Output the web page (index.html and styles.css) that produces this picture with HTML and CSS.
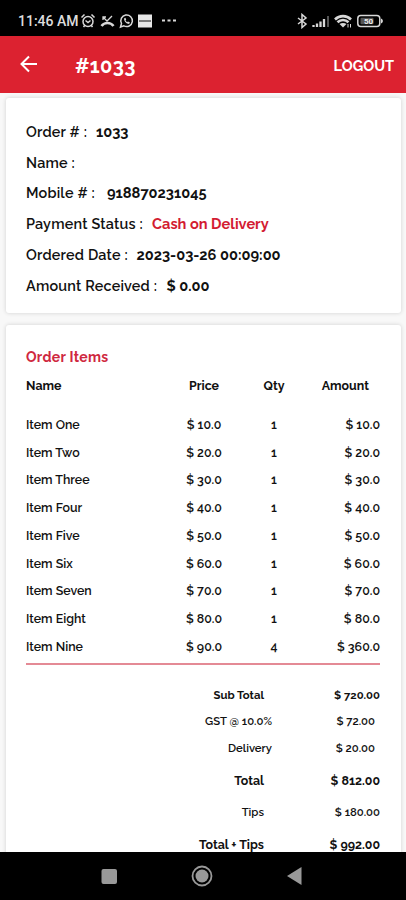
FILE: index.html
```html
<!DOCTYPE html>
<html lang="en">
<head>
    <meta charset="UTF-8">
    <meta name="viewport" content="width=device-width, initial-scale=1.0">
    <title>Order #1033</title>
    <link rel="stylesheet" href="styles.css">
</head>
<body>
    <!-- Status bar -->
    <div class="status-bar">
        <span class="clock">11:46 AM</span>
        <svg class="status-icons" width="100" height="16" viewBox="0 0 100 16" fill="none" stroke="#d8d8d8" stroke-width="1.5">
            <circle cx="8" cy="8.5" r="5"/>
            <path d="M1.5 4.5l3-3M14.5 4.5l-3-3M3.5 14l1.5-2M12.5 14L11 12M5.5 7.5L8 9.5l2.5-2"/>
            <path d="M23 4l4 4 5-5M23 7V4h3" stroke-width="1.3"/>
            <path d="M21.5 13c3-4 9-4 12 0" stroke-width="2.6"/>
            <path d="M40.5 14l1-3.5a5.8 5.8 0 1 1 2.4 2.4z"/>
            <path d="M44 5.5c0 3 2.5 5.3 5 5.5l1-1.5-2-1-1 .8-1.5-1.8.7-1-.8-1.7z" fill="#d8d8d8" stroke="none"/>
            <rect x="58" y="1.5" width="14" height="13" fill="#e6e6e6" stroke="none"/>
            <path d="M59 8h12" stroke="#555" stroke-width="1.5"/>
            <path d="M82 7.5h3M87.5 7.5h3M93 7.5h3" stroke-width="2.2"/>
        </svg>
        <svg class="status-icons right" width="88" height="16" viewBox="0 0 88 16" fill="none" stroke="#d8d8d8" stroke-width="1.5">
            <path d="M1 5l8 6-4 3.5V1.5L9 5l-8 6"/>
            <path d="M16.5 14v-2M20 14v-3.5M23.5 14V8.5M27 14V6" stroke-width="2.3"/>
            <path d="M31 14V3" stroke="#555" stroke-width="2"/>
            <path d="M38 6.5c4.5-4.5 11.5-4.5 16 0M40.5 9.2c3.2-3 7.8-3 11 0" stroke-width="2.6"/>
            <path d="M42.5 11l3.5 3.5 3.5-3.5c-2-1.5-5-1.5-7 0z" fill="#d8d8d8" stroke="none"/>
            <path d="M51 11v3.5M53.5 11v3.5" stroke-width="1"/>
            <rect x="60.8" y="2.5" width="22" height="11" rx="3"/>
            <path d="M84 5.5c2.5 1 2.5 4 0 5z" fill="#d8d8d8" stroke="none"/>
            <rect x="63.5" y="4.8" width="13" height="6.4" rx="1" fill="#555" stroke="none"/>
            <text class="battery-text" x="71.5" y="11">50</text>
        </svg>
    </div>

    <!-- Top bar -->
    <div class="app-bar">
        <svg class="back" width="18" height="18" viewBox="0 0 18 18" fill="none" stroke="#fff" stroke-width="2">
            <path d="M17 9H2M9 1.5L1.5 9 9 16.5"/>
        </svg>
        <h1>#1033</h1>
        <span class="logout">LOGOUT</span>
    </div>

    <div class="content">
        <!-- Order details -->
        <div class="card info">
            <div class="info-row"><span class="w-order">Order # :</span><b>1033</b></div>
            <div class="info-row"><span>Name :</span></div>
            <div class="info-row"><span class="w-mobile">Mobile # :</span><b>918870231045</b></div>
            <div class="info-row"><span class="w-payment">Payment Status :</span><b class="red">Cash on Delivery</b></div>
            <div class="info-row"><span class="w-date">Ordered Date :</span><b>2023-03-26 00:09:00</b></div>
            <div class="info-row"><span class="w-amount">Amount Received :</span><b>$ 0.00</b></div>
        </div>

        <!-- Order items -->
        <div class="card items">
            <h2>Order Items</h2>
            <div class="row head"><span>Name</span><span>Price</span><span>Qty</span><span>Amount</span></div>
            <div class="row"><span>Item One</span><span>$ 10.0</span><span>1</span><span>$ 10.0</span></div>
            <div class="row"><span>Item Two</span><span>$ 20.0</span><span>1</span><span>$ 20.0</span></div>
            <div class="row"><span>Item Three</span><span>$ 30.0</span><span>1</span><span>$ 30.0</span></div>
            <div class="row"><span>Item Four</span><span>$ 40.0</span><span>1</span><span>$ 40.0</span></div>
            <div class="row"><span>Item Five</span><span>$ 50.0</span><span>1</span><span>$ 50.0</span></div>
            <div class="row"><span>Item Six</span><span>$ 60.0</span><span>1</span><span>$ 60.0</span></div>
            <div class="row"><span>Item Seven</span><span>$ 70.0</span><span>1</span><span>$ 70.0</span></div>
            <div class="row"><span>Item Eight</span><span>$ 80.0</span><span>1</span><span>$ 80.0</span></div>
            <div class="row"><span>Item Nine</span><span>$ 90.0</span><span>4</span><span>$ 360.0</span></div>

            <div class="totals">
                <div class="total-row semi"><span>Sub Total</span><span>$ 720.00</span></div>
                <div class="total-row tax"><span>GST @ 10.0%</span><span>$ 72.00</span></div>
                <div class="total-row tax"><span>Delivery</span><span>$ 20.00</span></div>
                <div class="total-row strong"><span>Total</span><span>$ 812.00</span></div>
                <div class="total-row"><span>Tips</span><span>$ 180.00</span></div>
                <div class="total-row strong"><span>Total + Tips</span><span>$ 992.00</span></div>
            </div>
        </div>
    </div>

    <!-- Navigation buttons -->
    <div class="nav-bar">
        <svg width="406" height="48" viewBox="0 0 406 48" fill="#999">
            <rect x="101.5" y="17" width="15.5" height="15" rx="2"/>
            <circle cx="202" cy="24" r="9.5" fill="none" stroke="#999" stroke-width="1.8"/>
            <circle cx="202" cy="24" r="6.5"/>
            <path d="M287 24l14.5-9v18z"/>
        </svg>
    </div>
</body>
</html>
```
FILE: styles.css
```css
* {
    box-sizing: border-box;
}

body {
    margin: 0;
    height: 900px;
    display: flex;
    flex-direction: column;
    overflow: hidden;
    background-color: #f8f8f8;
    color: #111;
    font-family: Raleway, Lato, sans-serif;
    font-variant-numeric: oldstyle-nums;
}

h1, h2 {
    margin: 0;
}

/* Status bar */
.status-bar {
    flex: none;
    height: 36px;
    padding: 5px 21px 0 18px;
    display: flex;
    align-items: center;
    background-color: #000;
    color: #ddd;
}

.clock {
    width: 62px;
    font: 500 14px Roboto, sans-serif;
    white-space: nowrap;
}

.right {
    margin-left: auto;
}

.battery-text {
    font: bold 8px Roboto, sans-serif;
    text-anchor: middle;
    fill: #eee;
    stroke: none;
}

/* Top bar */
.app-bar {
    flex: none;
    height: 57px;
    padding: 0 12px 0 20px;
    display: flex;
    align-items: center;
    background-color: #dc2230;
    color: #fff;
}

.back {
    margin-bottom: 2px;
}

.app-bar h1 {
    margin-left: 37px;
    padding-top: 2px;
    font-size: 20px;
    line-height: 24px;
    letter-spacing: .4px;
}

.logout {
    margin-left: auto;
    padding-top: 2px;
    font-size: 14.5px;
    font-weight: bold;
}

/* Cards */
.content {
    flex: 1;
    min-height: 0;
    padding: 5px 5px 0 6px;
    overflow: hidden;
}

.card {
    background-color: #fff;
    border-radius: 3px;
    box-shadow: 0 0 4px rgba(0, 0, 0, .16);
}

.info {
    height: 215px;
    padding: 18px 20px;
}

.info-row {
    height: 30.75px;
    display: flex;
    align-items: center;
    font-size: 14.4px;
    font-weight: 600;
    white-space: nowrap;
}

.info-row span {
    letter-spacing: .2px;
}

.info-row b {
    font-size: 14.6px;
    font-weight: 700;
}

.w-order { width: 70px; }
.w-mobile { width: 81px; }
.w-payment { width: 126px; }
.w-date { width: 110.5px; }
.w-amount { width: 140.5px; }

.info-row .red {
    color: #d31c32;
}

.items {
    height: 560px;
    margin-top: 12px;
    padding: 22px 21px 0 20px;
}

.items h2 {
    height: 20px;
    line-height: 20px;
    font-size: 14px;
    color: #cf2840;
    letter-spacing: .3px;
}

.row {
    height: 27.75px;
    display: grid;
    grid-template-columns: 150px 56px 84px 64px;
    align-items: center;
    font-size: 12.4px;
    font-weight: 600;
    white-space: nowrap;
}

.row span:nth-child(2),
.row span:nth-child(3) {
    text-align: center;
}

.row span:nth-child(4) {
    text-align: right;
}

.head {
    height: 38px;
    padding-bottom: 1px;
    margin-bottom: 5.4px;
    font-weight: bold;
}

.row.head span:nth-child(4) {
    padding-right: 11px;
}

/* Totals */
.totals {
    border-top: 2px solid #e48a95;
    margin-top: 2.6px;
    padding-top: 17px;
}

.total-row {
    height: 32px;
    display: grid;
    grid-template-columns: 238px 116px;
    align-items: center;
    font-size: 11.3px;
    font-weight: 600;
    text-align: right;
    white-space: nowrap;
}

.semi {
    height: 26.5px;
    font-weight: bold;
}

/* Amount was set slightly to the left of the other totals */
.tax {
    height: 26.5px;
    grid-template-columns: 246px 103px;
}

.tax + .strong {
    margin-top: 3px;
}

.strong {
    font-size: 12.4px;
    font-weight: bold;
}

/* Bottom navigation */
.nav-bar {
    flex: none;
    height: 48px;
    background-color: #000;
}
```
